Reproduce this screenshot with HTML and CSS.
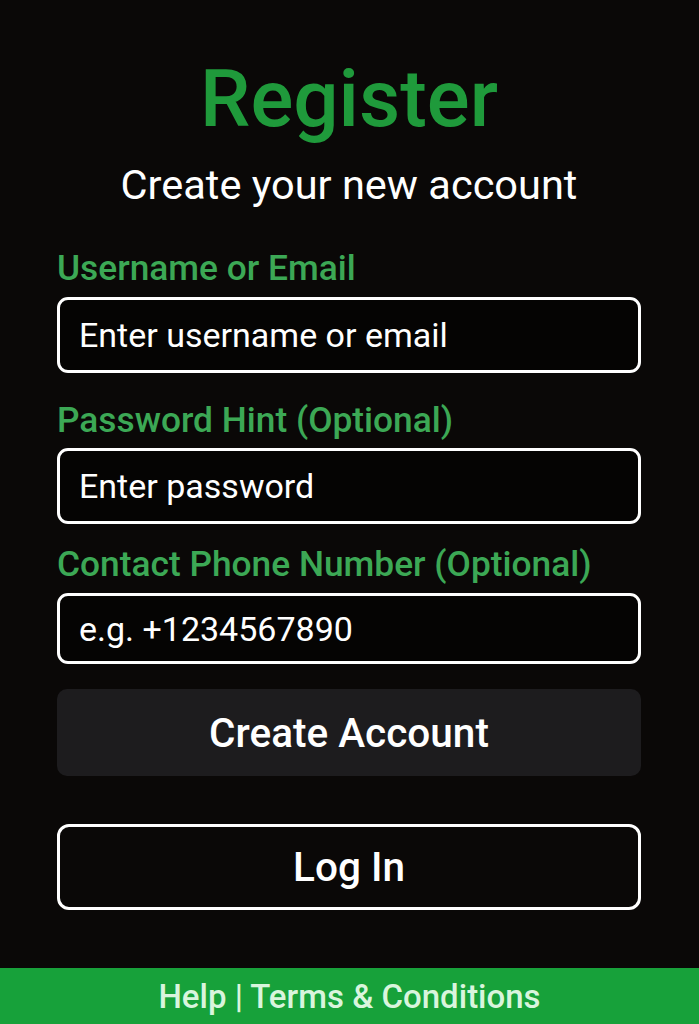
FILE: index.html
```html
<!DOCTYPE html>
<html lang="en">
<head>
<meta charset="utf-8">
<title>Register</title>
<link rel="stylesheet" href="styles.css">
</head>
<body>
<main class="page">
  <h1 class="title">Register</h1>
  <p class="subtitle">Create your new account</p>
  <form class="form">
    <label class="label label-1">Username or Email</label>
    <div class="field field-tall"><span class="placeholder">Enter username or email</span></div>
    <label class="label label-2">Password Hint (Optional)</label>
    <div class="field field-tall"><span class="placeholder">Enter password</span></div>
    <label class="label label-3">Contact Phone Number (Optional)</label>
    <div class="field field-short"><span class="placeholder">e.g. +1234567890</span></div>
    <div class="btn btn-primary">Create Account</div>
    <div class="btn btn-outline">Log In</div>
  </form>
</main>
<footer class="footer">Help | Terms &amp; Conditions</footer>
</body>
</html>
```
FILE: styles.css
```css
html, body {
  margin: 0;
  padding: 0;
  background: #0a0807;
}
body {
  font-family: Roboto, "Noto Sans", "Liberation Sans", sans-serif;
  color: #ffffff;
  display: flex;
  flex-direction: column;
  height: 1024px;
}
.page {
  flex: 1;
  display: flex;
  flex-direction: column;
  align-items: center;
  padding: 0 58px 0 57px;
}
.title {
  margin: 54px 0 0;
  font-size: 80px;
  line-height: 90px;
  font-weight: 500;
  color: #1f9a3b;
}
.subtitle {
  margin: 17px 0 0;
  font-size: 41.5px;
  line-height: 48px;
  font-weight: 400;
}
.form {
  align-self: stretch;
  display: flex;
  flex-direction: column;
}
.label {
  font-size: 35.3px;
  line-height: 40px;
  font-weight: 500;
  color: #3ca855;
  margin-bottom: 9px;
}
.label-1 { margin-top: 39px; }
.label-2 { margin-top: 27px; margin-bottom: 8px; }
.label-3 { margin-top: 20px; }
.field {
  box-sizing: border-box;
  border: 3px solid #ffffff;
  border-radius: 11px;
  display: flex;
  align-items: center;
  padding: 0 19px;
  background: #050403;
}
.field-tall { height: 76px; }
.field-short { height: 71px; }
.placeholder {
  font-size: 34px;
  color: #ffffff;
}
.btn {
  box-sizing: border-box;
  display: flex;
  align-items: center;
  justify-content: center;
  border-radius: 10px;
  font-size: 40.5px;
  font-weight: 500;
  color: #ffffff;
}
.btn-primary {
  margin-top: 25px;
  height: 87px;
  background: #1d1c1e;
}
.btn-outline {
  margin-top: 48px;
  height: 86px;
  border: 3px solid #ffffff;
  border-radius: 12px;
}
.footer {
  height: 56px;
  flex-shrink: 0;
  background: #17a13a;
  color: #d9f5dd;
  font-size: 33px;
  font-weight: 500;
  display: flex;
  align-items: center;
  justify-content: center;
}
```
